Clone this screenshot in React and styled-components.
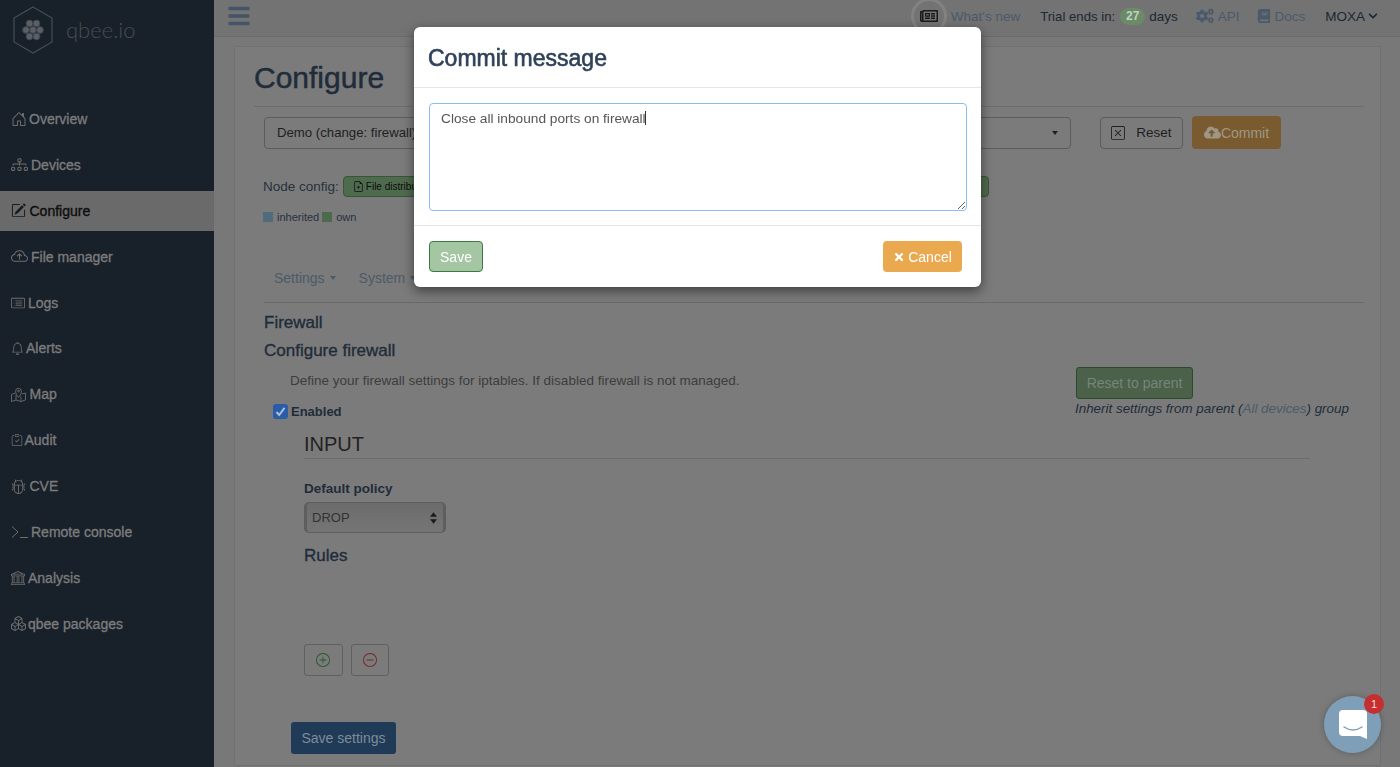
import React from 'react'
import styled, { createGlobalStyle, css } from 'styled-components'
import {
  BsHouseDoor, BsDiagram3, BsPencilSquare, BsCloudArrowUp, BsCardList, BsBell,
  BsClipboardCheck, BsBug, BsBank, BsBoxes, BsXSquare, BsPlusCircle, BsDashCircle,
  BsFileEarmarkPlus,
} from 'react-icons/bs'
import { FaBars, FaCogs, FaBook, FaChevronDown, FaCloudUploadAlt, FaTimes, FaRegNewspaper } from 'react-icons/fa'

const Terminal = () => (
  <svg width="17" height="14" viewBox="0 0 17 14" fill="none" stroke="currentColor" strokeWidth="1">
    <polyline points="1,1.5 7,7 1,12.5" />
    <line x1="9" y1="12.5" x2="17" y2="12.5" />
  </svg>
)

const MapPin = () => (
  <svg width="15" height="15" viewBox="0 0 15 15" fill="none" stroke="currentColor" strokeWidth="0.9">
    <path d="M4 6L.5 7.5v7L5 13l5 1.5 4.5-1.5V6L11 7" />
    <path d="M5 7.5V13M10 9.5v5" />
    <path d="M7.5 10.5C6 8.5 4.6 6.8 4.6 4.2a2.9 2.9 0 0 1 5.8 0c0 2.6-1.4 4.3-2.9 6.3z" />
    <circle cx="7.5" cy="4" r="0.9" />
  </svg>
)

const navItems = [
  { label: 'Overview', Icon: BsHouseDoor, width: 18, size: 16 },
  { label: 'Devices', Icon: BsDiagram3, width: 20, size: 17 },
  { label: 'Configure', Icon: BsPencilSquare, width: 18.5, size: 15, active: true },
  { label: 'File manager', Icon: BsCloudArrowUp, width: 20, size: 17 },
  { label: 'Logs', Icon: BsCardList, width: 17, size: 14 },
  { label: 'Alerts', Icon: BsBell, width: 15, size: 13 },
  { label: 'Map', Icon: MapPin, width: 18.5, size: 15 },
  { label: 'Audit', Icon: BsClipboardCheck, width: 13.5, size: 12 },
  { label: 'CVE', Icon: BsBug, width: 18.5, size: 15 },
  { label: 'Remote console', Icon: Terminal, width: 20, size: 17 },
  { label: 'Analysis', Icon: BsBank, width: 17, size: 14 },
  { label: 'qbee packages', Icon: BsBoxes, width: 17, size: 15 },
]

const Logo = () => (
  <svg width="42" height="48" viewBox="0 0 42 48" fill="none">
    <polygon points="21,1 40,12 40,36 21,47 2,36 2,12" stroke="#474d55" strokeWidth="1.2" />
    {[[21, 24], [14, 24], [28, 24], [17.5, 17.5], [24.5, 17.5], [17.5, 30.5], [24.5, 30.5]].map(([cx, cy]) => (
      <circle key={`${cx}-${cy}`} cx={cx} cy={cy} r="3.4" fill="#5b6067" stroke="#3c424a" strokeWidth="1" />
    ))}
  </svg>
)

const App = () => (
  <Page>
    <GlobalStyle />
    <Sidebar>
      <Brand>
        <Logo />
        <BrandName>qbee.io</BrandName>
      </Brand>
      <nav>
        {navItems.map(({ label, Icon, width, size, active }) => (
          <NavItem key={label} $active={active}>
            <NavIcon $width={width} $active={active}><Icon size={size} /></NavIcon>
            {label}
          </NavItem>
        ))}
      </nav>
    </Sidebar>

    <Main>
      <Header>
        <Burger><FaBars size={24} /></Burger>
        <HeaderRight>
          <NewsRing><FaRegNewspaper size={18} /></NewsRing>
          <HeaderLink $gap={4}>What's new</HeaderLink>
          <TrialText $gap={20} $size={13.2}>Trial ends in:</TrialText>
          <DaysBadge>27</DaysBadge>
          <TrialText $gap={4}>days</TrialText>
          <HeaderLink $gap={18}><FaCogs size={18} />API</HeaderLink>
          <HeaderLink $gap={18} $iconGap={3}><FaBook size={14} />Docs</HeaderLink>
          <TrialText $gap={20}>MOXA</TrialText>
          <Chevron><FaChevronDown size={10} /></Chevron>
        </HeaderRight>
      </Header>

      <Panel>
        <Title>Configure</Title>
        <ActionRow>
          <ChangeSelect>
            Demo (change: firewall)
            <Caret />
          </ChangeSelect>
          <ResetButton><BsXSquare size={14} />Reset</ResetButton>
          <CommitButton><FaCloudUploadAlt size={17} />Commit</CommitButton>
        </ActionRow>

        <NodeRow>
          <NodeLabel>Node config:</NodeLabel>
          <NodePill><BsFileEarmarkPlus size={11} />File distribution</NodePill>
        </NodeRow>
        <Legend>
          <Swatch $color="#4f6b7c" />inherited
          <Swatch $color="#4d6a4d" />own
        </Legend>

        <Tabs>
          <Tab>Settings<Caret /></Tab>
          <Tab>System<Caret /></Tab>
        </Tabs>

        <SectionTitle $top={10}>Firewall</SectionTitle>
        <SectionTitle $top={8}>Configure firewall</SectionTitle>

        <IntroRow>
          <div>
            <Description>Define your firewall settings for iptables. If disabled firewall is not managed.</Description>
            <EnabledRow>
              <CheckBox><svg width="13" height="13" viewBox="0 0 13 13" fill="none" stroke="#a9bfdc" strokeWidth="2"><polyline points="2.5,7 5.2,10 10.5,2.8" /></svg></CheckBox>
              Enabled
            </EnabledRow>
          </div>
          <ParentColumn>
            <ParentButton>Reset to parent</ParentButton>
            <ParentNote>Inherit settings from parent (<span>All devices</span>) group</ParentNote>
          </ParentColumn>
        </IntroRow>

        <ChainSection>
          <ChainTitle>INPUT</ChainTitle>
          <FieldLabel>Default policy</FieldLabel>
          <PolicySelect>
            DROP
            <svg width="7" height="12" viewBox="0 0 8 13" fill="#1c1c1c">
              <polygon points="4,0 8,5 0,5" />
              <polygon points="0,8 8,8 4,13" />
            </svg>
          </PolicySelect>
          <RulesTitle>Rules</RulesTitle>
          <RuleButtons>
            <RuleButton $color="#255a28"><BsPlusCircle size={14} /></RuleButton>
            <RuleButton $color="#752525"><BsDashCircle size={14} /></RuleButton>
          </RuleButtons>
        </ChainSection>

        <SaveSettings>Save settings</SaveSettings>
      </Panel>
    </Main>

    <Modal>
      <ModalHeader>Commit message</ModalHeader>
      <ModalBody>
        <AreaWrap>
          <MessageArea defaultValue="Close all inbound ports on firewall" />
          <TextCaret />
        </AreaWrap>
      </ModalBody>
      <ModalFooter>
        <SaveButton>Save</SaveButton>
        <CancelButton><FaTimes size={12} />Cancel</CancelButton>
      </ModalFooter>
    </Modal>

    <ChatBubble>
      <svg width="28" height="29" viewBox="0 0 28 29">
        <path d="M4 0h20a4 4 0 0 1 4 4v25l-7-3H4a4 4 0 0 1-4-4V4a4 4 0 0 1 4-4z" fill="#fff" />
        <path d="M5 17q9 6 18 0" fill="none" stroke="#7f9fb9" strokeWidth="1.5" strokeLinecap="round" />
      </svg>
      <ChatBadge>1</ChatBadge>
    </ChatBubble>
  </Page>
)

export default App

const medium = css`
  -webkit-text-stroke: 0.35px currentColor;
`

const GlobalStyle = createGlobalStyle`
  html, body {
    margin: 0;
    height: 100%;
    overflow: hidden;
    background: #787878;
    font-family: "Liberation Sans", Arial, sans-serif;
  }
`

const Page = styled.div`
  display: flex;
  height: 767px;
  overflow: hidden;
`

const Sidebar = styled.aside`
  width: 214px;
  flex: none;
  background: #18202a;
`

const Brand = styled.div`
  height: 99px;
  box-sizing: border-box;
  padding: 6px 0 0 12px;
  display: flex;
  align-items: flex-start;
  gap: 12px;
`

const BrandName = styled.span`
  font-family: Lato, sans-serif;
  font-weight: 300;
  font-size: 22px;
  line-height: 48px;
  color: #474c52;
`

const NavItem = styled.div`
  height: 40px;
  margin-bottom: 5.9px;
  padding-left: 11px;
  display: flex;
  align-items: center;
  font-size: 14px;
  ${medium}
  color: ${(p) => (p.$active ? '#0d0d0d' : '#7b7b7b')};
  background: ${(p) => (p.$active ? '#6a6a6a' : 'transparent')};
`

const NavIcon = styled.span`
  width: ${(p) => p.$width}px;
  flex: none;
  display: flex;
  align-items: center;
  color: ${(p) => (p.$active ? '#1a1a1a' : '#6c6c6c')};
  -webkit-text-stroke: 0;
`

const Main = styled.main`
  flex: 1;
  min-width: 0;
  background: #787878;
`

const Header = styled.header`
  height: 37px;
  box-sizing: border-box;
  padding: 0 22px 4px 13px;
  display: flex;
  align-items: center;
  justify-content: space-between;
  background: #737373;
  border-bottom: 1px solid #6b6b6b;
`

const Burger = styled.span`
  display: flex;
  color: #435566;
`

const HeaderRight = styled.div`
  display: flex;
  align-items: center;
  font-size: 13.5px;
`

const NewsRing = styled.span`
  width: 36px;
  height: 36px;
  margin-top: -1px;
  box-sizing: border-box;
  border: 3px solid #828282;
  border-radius: 50%;
  display: flex;
  align-items: center;
  justify-content: center;
  color: #1a1a1a;
`

const HeaderLink = styled.span`
  margin-left: ${(p) => p.$gap}px;
  display: flex;
  align-items: center;
  gap: ${(p) => p.$iconGap || 4}px;
  color: #4a5a6a;
`

const TrialText = styled.span`
  margin-left: ${(p) => p.$gap}px;
  font-size: ${(p) => p.$size || 13.5}px;
  color: #1d2734;
`

const DaysBadge = styled.span`
  margin-left: 5px;
  width: 25px;
  height: 17px;
  border-radius: 9px;
  background: #6a8a68;
  color: #c2d0c2;
  font-size: 12px;
  font-weight: bold;
  display: flex;
  align-items: center;
  justify-content: center;
`

const Chevron = styled.span`
  margin-left: 3px;
  display: flex;
  color: #1d2734;
`

const Panel = styled.section`
  margin: 9px 19px 0 20px;
  padding: 0 16px 0 20px;
  height: 720px;
  box-sizing: border-box;
  background: #7b7b7b;
  border: 1px solid #717171;
  color: #212c3a;
`

const Title = styled.h1`
  margin: 0 0 0 -1px;
  height: 60px;
  box-sizing: border-box;
  border-bottom: 1px solid #6d6d6d;
  font-size: 30px;
  font-weight: normal;
  line-height: 62px;
  -webkit-text-stroke: 0.5px currentColor;
`

const ActionRow = styled.div`
  margin: 9px 0 0 9px;
  display: flex;
  align-items: center;
`

const ChangeSelect = styled.div`
  width: 807px;
  height: 32px;
  box-sizing: border-box;
  padding: 0 12px;
  display: flex;
  align-items: center;
  justify-content: space-between;
  border: 1px solid #5c5c5c;
  border-radius: 4px;
  font-size: 13.2px;
  color: #1f1f1f;
`

const Caret = styled.i`
  width: 0;
  height: 0;
  border-left: 3.5px solid transparent;
  border-right: 3.5px solid transparent;
  border-top: 4px solid currentColor;
`

const ResetButton = styled.div`
  margin-left: 29px;
  width: 83px;
  height: 32px;
  box-sizing: border-box;
  display: flex;
  align-items: center;
  justify-content: center;
  gap: 11px;
  border: 1px solid #5c5c5c;
  border-radius: 4px;
  font-size: 13.5px;
  color: #1f1f1f;
`

const CommitButton = styled.div`
  margin-left: 9px;
  width: 89px;
  height: 33px;
  display: flex;
  align-items: center;
  justify-content: center;
  border-radius: 4px;
  background: #7a5a2f;
  color: #9f9786;
  font-size: 14px;
`

const NodeRow = styled.div`
  margin: 27px 0 0 8px;
  height: 21px;
  display: flex;
  align-items: center;
  gap: 4px;
`

const NodeLabel = styled.span`
  font-size: 13.5px;
  color: #27313f;
`

const NodePill = styled.span`
  width: 646px;
  height: 21px;
  box-sizing: border-box;
  padding-left: 9px;
  display: flex;
  align-items: center;
  gap: 2px;
  border: 1px solid #3c533b;
  border-radius: 4px;
  background: #4f6b4d;
  color: #0c0c0c;
  font-size: 10px;
`

const Legend = styled.div`
  margin: 9px 0 0 8px;
  height: 22px;
  display: flex;
  align-items: center;
  font-size: 11px;
  color: #27313f;
`

const Swatch = styled.i`
  width: 10px;
  height: 10px;
  margin: 0 4px 0 3px;
  background: ${(p) => p.$color};
  &:first-child {
    margin-left: 0;
  }
`

const Tabs = styled.div`
  margin: 34px 0 0 9px;
  height: 41px;
  box-sizing: border-box;
  padding: 8px 0 0 10px;
  display: flex;
  gap: 23px;
  border-bottom: 1px solid #6a6a6a;
`

const Tab = styled.span`
  display: flex;
  align-items: center;
  align-self: flex-start;
  gap: 5px;
  font-size: 14px;
  color: #4d5a68;
`

const SectionTitle = styled.h3`
  margin: ${(p) => p.$top}px 0 0 9px;
  font-size: 17px;
  font-weight: normal;
  line-height: 20px;
  ${medium}
`

const IntroRow = styled.div`
  margin: 3px 0 0 0;
  display: flex;
  justify-content: space-between;
  height: 54px;
`

const Description = styled.p`
  margin: 9px 0 0 35px;
  font-size: 13.5px;
  line-height: 16px;
  color: #3d3d3d;
`

const EnabledRow = styled.label`
  margin: 15px 0 0 18px;
  display: flex;
  align-items: center;
  gap: 3px;
  font-size: 13px;
  font-weight: bold;
  line-height: 15px;
`

const CheckBox = styled.span`
  width: 15px;
  height: 15px;
  border-radius: 3px;
  background: #2a5ca8;
  display: flex;
  align-items: center;
  justify-content: center;
`

const ParentColumn = styled.div`
  width: 288px;
  margin-top: 3px;
`

const ParentButton = styled.div`
  width: 117px;
  height: 32px;
  box-sizing: border-box;
  display: flex;
  align-items: center;
  justify-content: center;
  border: 1px solid #2c4a2c;
  border-radius: 3px;
  background: #4b614a;
  color: #76867a;
  font-size: 14px;
`

const ParentNote = styled.div`
  margin-top: 2px;
  margin-left: -1px;
  font-size: 13.4px;
  font-style: italic;
  line-height: 15px;
  white-space: nowrap;
  color: #212c3a;
  span {
    color: #4d5a68;
  }
`

const ChainSection = styled.div`
  margin: 12px 54px 0 49px;
`

const ChainTitle = styled.h2`
  margin: 0;
  height: 28px;
  border-bottom: 1px solid #6d6d6d;
  font-size: 20px;
  font-weight: normal;
  line-height: 28px;
  color: #222;
`

const FieldLabel = styled.div`
  margin-top: 22px;
  font-size: 13.5px;
  font-weight: bold;
  line-height: 16px;
`

const PolicySelect = styled.div`
  margin-top: 5px;
  width: 142px;
  height: 31px;
  box-sizing: border-box;
  padding: 0 6px 0 5px;
  display: flex;
  align-items: center;
  justify-content: space-between;
  border: 1px solid #5e5e5e;
  border-left: 3px solid #5e5e5e;
  border-right: 3px solid #5e5e5e;
  border-radius: 5px;
  background: linear-gradient(#6c6c6c, #757575);
  font-size: 13px;
  color: #333;
`

const RulesTitle = styled.h3`
  margin: 13px 0 0;
  font-size: 17px;
  font-weight: normal;
  line-height: 20px;
  ${medium}
`

const RuleButtons = styled.div`
  margin-top: 78px;
  display: flex;
  gap: 8px;
`

const RuleButton = styled.div`
  width: 38.5px;
  height: 32px;
  box-sizing: border-box;
  display: flex;
  align-items: center;
  justify-content: center;
  border: 1px solid #606060;
  border-radius: 3px;
  color: ${(p) => p.$color};
`

const SaveSettings = styled.div`
  margin: 46px 0 0 36px;
  width: 105px;
  height: 32px;
  display: flex;
  align-items: center;
  justify-content: center;
  border-radius: 3px;
  background: #1f3b58;
  color: #7f8b98;
  font-size: 14px;
`

const Modal = styled.div`
  position: fixed;
  top: 27px;
  left: 414px;
  width: 567px;
  height: 260px;
  border-radius: 6px;
  background: #fff;
  box-shadow: 0 4px 12px rgba(0, 0, 0, 0.5);
  display: flex;
  flex-direction: column;
`

const ModalHeader = styled.h4`
  margin: 0;
  height: 61px;
  box-sizing: border-box;
  padding-left: 14px;
  border-bottom: 1px solid #e5e5e5;
  font-size: 23px;
  font-weight: normal;
  line-height: 62px;
  color: #2f4258;
  -webkit-text-stroke: 0.6px currentColor;
`

const ModalBody = styled.div`
  height: 138px;
  box-sizing: border-box;
  padding: 15px 14px 0 15px;
  border-bottom: 1px solid #e5e5e5;
`

const AreaWrap = styled.div`
  position: relative;
`

const MessageArea = styled.textarea`
  display: block;
  width: 100%;
  height: 108px;
  box-sizing: border-box;
  padding: 6px 11px;
  border: 1px solid #8dbdec;
  border-radius: 4px;
  outline: none;
  font-family: "Liberation Sans", Arial, sans-serif;
  font-size: 13.7px;
  line-height: 17px;
  color: #555;
`

const TextCaret = styled.span`
  position: absolute;
  left: 216px;
  top: 8px;
  width: 1px;
  height: 14px;
  background: #333;
`

const ModalFooter = styled.div`
  flex: 1;
  padding: 15px 19px 0 15px;
  display: flex;
  align-items: flex-start;
  justify-content: space-between;
`

const SaveButton = styled.div`
  width: 54px;
  height: 31px;
  box-sizing: border-box;
  display: flex;
  align-items: center;
  justify-content: center;
  border: 1px solid #3c7a44;
  border-radius: 4px;
  background: #a4c6a2;
  color: #fff;
  font-size: 14px;
`

const CancelButton = styled.div`
  width: 79px;
  height: 31px;
  display: flex;
  align-items: center;
  justify-content: center;
  gap: 3px;
  border-radius: 4px;
  background: #eba94f;
  color: #fff;
  font-size: 14px;
`

const ChatBubble = styled.div`
  position: fixed;
  left: 1324px;
  top: 696px;
  width: 57px;
  height: 57px;
  border-radius: 50%;
  background: #7f9fb9;
  box-shadow: 0 0 6px rgba(0, 0, 0, 0.25);
  display: flex;
  align-items: center;
  justify-content: center;
`

const ChatBadge = styled.span`
  position: absolute;
  top: -2px;
  right: -3px;
  width: 20px;
  height: 20px;
  border-radius: 50%;
  background: #c62f2f;
  color: #f3dcdc;
  font-size: 11px;
  display: flex;
  align-items: center;
  justify-content: center;
`
